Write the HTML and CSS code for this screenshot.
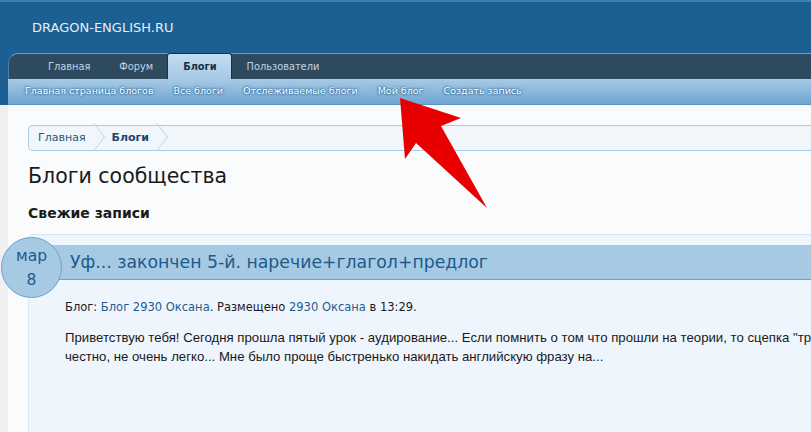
FILE: index.html
```html
<!DOCTYPE html>
<html lang="ru">
<head>
    <meta charset="UTF-8">
    <meta name="viewport" content="width=device-width, initial-scale=1.0">
    <title>Блоги сообщества</title>
    <link rel="stylesheet" href="styles.css">
</head>
<body>
<div class="header">
    <div class="logo">DRAGON-ENGLISH.RU</div>
    <div class="nav">
        <a class="tab">Главная</a>
        <a class="tab">Форум</a>
        <a class="tab selected">Блоги</a>
        <a class="tab">Пользователи</a>
    </div>
    <div class="subnav">
        <a>Главная страница блогов</a>
        <a>Все блоги</a>
        <a>Отслеживаемые блоги</a>
        <a>Мой блог</a>
        <a>Создать запись</a>
    </div>
</div>
<div class="content">
    <div class="crumbs">
        <span class="crumb">Главная</span>
        <span class="crumb current">Блоги</span>
    </div>
    <h1>Блоги сообщества</h1>
    <h2>Свежие записи</h2>
    <div class="post">
        <div class="date">
            <span>мар</span>
            <span>8</span>
        </div>
        <div class="post_title">Уф... закончен 5-й. наречие+глагол+предлог</div>
        <div class="meta">Блог: <a>Блог 2930 Оксана</a>. Размещено <a>2930 Оксана</a> в 13:29.</div>
        <div class="text">Приветствую тебя! Сегодня прошла пятый урок - аудирование... Если помнить о том что прошли на теории, то сцепка "тройка" в принципе ясна, но если честно, не очень легко... Мне было проще быстренько накидать английскую фразу на...</div>
    </div>
</div>
<!-- стрелка поверх меню -->
<svg class="arrow" width="811" height="432" viewBox="0 0 811 432">
    <polygon points="400,98 461,118 441,126 487,208 416,143 405,159" fill="#e80000"/>
</svg>
</body>
</html>
```

FILE: styles.css
```css
body {
    margin: 0;
    background: #f0f0f0;
    font-family: "DejaVu Sans", sans-serif;
    width: 811px;
    height: 432px;
    overflow: hidden;
    position: relative;
}
.header {
    background: #1b5f93;
    border-top: 2px solid #3d7fb3;
}
.logo {
    height: 51px;
    line-height: 51px;
    padding-left: 32px;
    color: #e6eff7;
    font-size: 13px;
}
.nav {
    margin-left: 8px;
    height: 25px;
    background: #2d4a5f;
    border-top: 1px solid #6b9dcb;
    border-left: 1px solid #4f7fa8;
    border-top-left-radius: 10px;
    display: flex;
    padding-left: 24px;
    align-items: stretch;
}
.tab {
    padding: 0 14px 0 15px;
    color: #c3d4e2;
    font-size: 9.8px;
    line-height: 25px;
}
.tab.selected {
    background: linear-gradient(#c3dcef, #a6c9e5);
    color: #142f47;
    font-weight: bold;
    margin-top: -1px;
    border-top: 1px solid #17324a;
    border-left: 1px solid #17324a;
    border-right: 1px solid #17324a;
    border-top-left-radius: 3px;
    border-top-right-radius: 3px;
    line-height: 25px;
}
.subnav {
    margin-left: 8px;
    height: 25px;
    background: linear-gradient(#a8cae5, #6ea5d2);
    display: flex;
    padding-left: 7px;
    border-bottom: 1px solid #5f92bd;
}
.subnav a {
    padding: 0 10px;
    line-height: 24px;
    color: #fff;
    font-size: 9.5px;
    text-shadow: 0 0 3px #1e5b8c, 0 0 2px #1e5b8c;
}
.content {
    margin-left: 8px;
    background: #fafbfd;
    padding: 20px 0 0 20px;
    height: 400px;
}
.crumbs {
    height: 24px;
    background: #f1f6fb;
    border: 1px solid #a9cce8;
    border-right: none;
    border-radius: 5px 0 0 5px;
    display: flex;
    align-items: center;
}
.crumb {
    position: relative;
    font-size: 11px;
    color: #1d5886;
    padding: 0 21px 0 9px;
    line-height: 24px;
}
.crumb.current {
    font-weight: bold;
    color: #17466e;
    padding-left: 5px;
}
.crumb::after {
    content: "";
    position: absolute;
    right: 4px;
    top: 2px;
    width: 17px;
    height: 17px;
    border-top: 1px solid #c2daee;
    border-right: 1px solid #c2daee;
    transform: rotate(45deg) skew(8deg, 8deg);
}
h1 {
    margin: 11px 0 0 0;
    font-weight: normal;
    font-size: 20.5px;
    color: #1a1a1a;
    line-height: 28px;
}
h2 {
    margin: 12px 0 0 0;
    font-size: 14px;
    color: #1a1a1a;
    line-height: 22px;
}
.post {
    position: relative;
    margin-top: 10px;
    background: #eef5fd;
    border-top: 1px solid #d6e7f6;
    border-left: 1px solid #d6e7f6;
    border-top-left-radius: 5px;
    padding-top: 10px;
    height: 300px;
}
.date {
    position: absolute;
    left: -28px;
    top: 2px;
    width: 59px;
    height: 59px;
    border-radius: 50%;
    background: #a7cae4;
    border: 1px solid #6ea1cc;
    display: flex;
    flex-direction: column;
    align-items: center;
    justify-content: center;
    color: #1d5a8b;
    font-size: 15.5px;
    line-height: 24px;
}
.post_title {
    height: 34px;
    line-height: 34px;
    background: #a7cae4;
    border-bottom: 1px solid #6ea1cc;
    padding-left: 41px;
    color: #1c5a8c;
    font-size: 17.3px;
}
.meta {
    margin: 20px 0 0 36px;
    font-size: 11.5px;
    color: #1a1a1a;
}
.meta a {
    color: #1f5b8c;
}
.text {
    margin: 14px 0 0 36px;
    font-family: "Liberation Sans", sans-serif;
    font-size: 13.2px;
    line-height: 19px;
    color: #1a1a1a;
    width: 955px;
}
.arrow {
    position: absolute;
    left: 0;
    top: 0;
}
```
